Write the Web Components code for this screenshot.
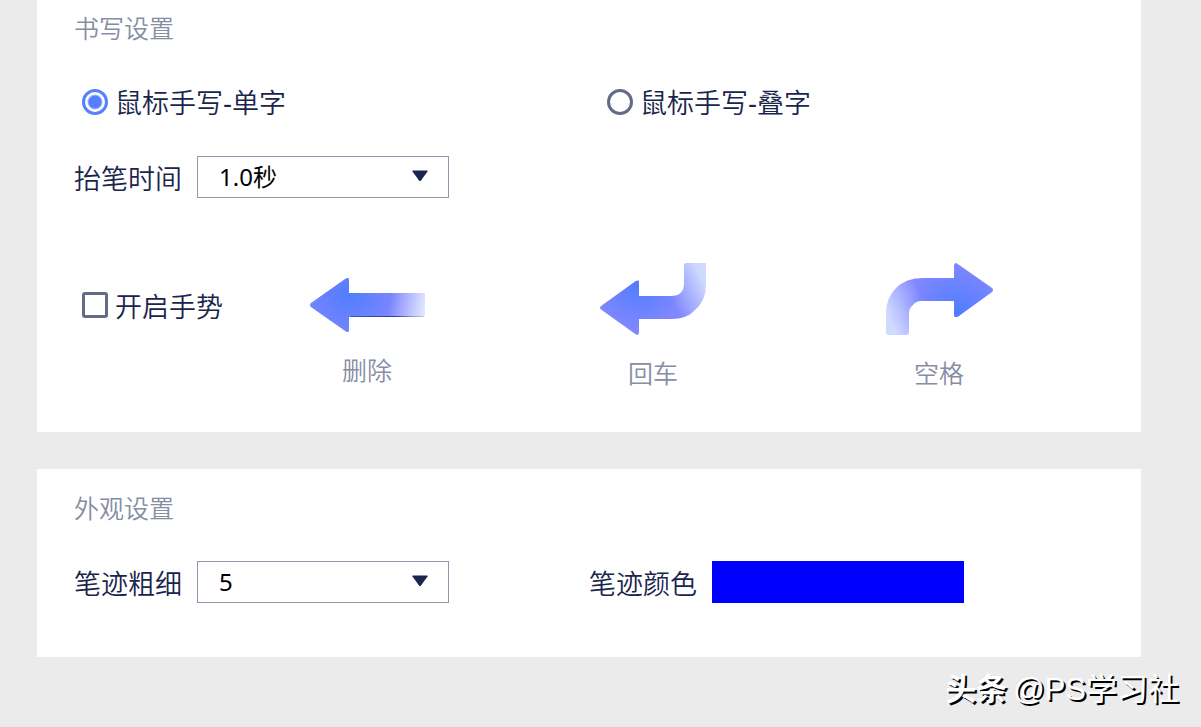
<!DOCTYPE html>
<html lang="zh-CN">
<head>
<meta charset="UTF-8">
<meta name="viewport" content="width=device-width, initial-scale=1">
<title>手写输入设置</title>
<style>
  body {
    margin: 0;
    min-height: 100vh;
    background: #ebebeb;
    font-family: "Noto Sans", "Noto Sans CJK SC", sans-serif;
    font-weight: 350;
    color: #19254d;
  }
</style>
</head>
<body>
<settings-page>
  <settings-card heading="书写设置">
    <radio-group name="mode" options="鼠标手写-单字,鼠标手写-叠字" value="0"></radio-group>
    <select-field label="抬笔时间" options="0.5秒,1.0秒,1.5秒,2.0秒" value="1.0秒"></select-field>
    <gesture-row label="开启手势">
      <gesture-item icon="delete">删除</gesture-item>
      <gesture-item icon="enter">回车</gesture-item>
      <gesture-item icon="space">空格</gesture-item>
    </gesture-row>
  </settings-card>
  <settings-card heading="外观设置" class="look">
    <field-row>
      <select-field label="笔迹粗细" options="1,2,3,4,5,6,7,8" value="5"></select-field>
      <color-field label="笔迹颜色" value="#0000ff"></color-field>
    </field-row>
  </settings-card>
  <page-mark slot="mark" brand="头条">@PS学习社</page-mark>
</settings-page>

<script>
class SettingsPage extends HTMLElement {
  constructor() {
    super();
    this.attachShadow({ mode: 'open' });
    this.shadowRoot.innerHTML = `
      <style>
        :host {
          display: block;
          position: relative;
          box-sizing: border-box;
          min-height: 100vh;
          overflow: hidden;
        }
        main {
          display: flex;
          flex-direction: column;
          gap: 37px;
          margin-top: -11px;
          padding: 0 60px 70px 37px;
        }
      </style>
      <main><slot></slot></main>
      <slot name="mark"></slot>
    `;
  }
}

class SettingsCard extends HTMLElement {
  constructor() {
    super();
    this.attachShadow({ mode: 'open' });
    this.shadowRoot.innerHTML = `
      <style>
        :host {
          display: flex;
          flex-direction: column;
          gap: 33px;
          padding: 22px 37px 40px;
          background: #fff;
        }
        :host(.look) { padding-bottom: 54px; }
        h2 {
          margin: 0 0 3px;
          font-size: 25px;
          font-weight: inherit;
          line-height: 34px;
          color: #868da5;
        }
      </style>
      <h2></h2>
      <slot></slot>
    `;
    this.shadowRoot.querySelector('h2').textContent = this.getAttribute('heading');
  }
}

class FieldRow extends HTMLElement {
  constructor() {
    super();
    this.attachShadow({ mode: 'open' });
    this.shadowRoot.innerHTML = `
      <style>
        :host {
          display: grid;
          grid-template-columns: 1fr 1fr;
        }
      </style>
      <slot></slot>
    `;
  }
}

class RadioGroup extends HTMLElement {
  constructor() {
    super();
    this.attachShadow({ mode: 'open' });
    const name = this.getAttribute('name');
    const options = this.getAttribute('options').split(',');
    this.shadowRoot.innerHTML = `
      <style>
        :host {
          display: grid;
          grid-template-columns: 1fr 1fr;
          column-gap: 20px;
        }
        label {
          display: flex;
          align-items: center;
          gap: 7px;
          padding-left: 8px;
          font-family: "Liberation Sans", "Noto Sans CJK SC", sans-serif;
          font-size: 27px;
          line-height: 38px;
        }
        span { padding-top: 4px; }
        input {
          appearance: none;
          flex: none;
          box-sizing: border-box;
          width: 26px;
          height: 26px;
          margin: 0;
          border: 3px solid #636b87;
          border-radius: 50%;
        }
        input:checked {
          border-color: #5580ff;
          background: radial-gradient(circle, #5580ff 6px, #fff 8px);
        }
      </style>
      ${options.map((text, i) => `
        <label><input type="radio" name="${name}" value="${i}"><span>${text}</span></label>
      `).join('')}
    `;
    this.shadowRoot.querySelectorAll('input')[this.getAttribute('value')].checked = true;
  }
}

class SelectField extends HTMLElement {
  constructor() {
    super();
    this.attachShadow({ mode: 'open' });
    const options = this.getAttribute('options').split(',');
    this.shadowRoot.innerHTML = `
      <style>
        :host {
          display: flex;
          align-items: center;
          gap: 15px;
        }
        label {
          padding-top: 4px;
          font-size: 27px;
          line-height: 38px;
        }
        .box {
          position: relative;
          width: 252px;
        }
        select {
          appearance: none;
          display: block;
          box-sizing: border-box;
          width: 100%;
          height: 42px;
          padding: 0 40px 2px 21px;
          border: 1px solid #9297ad;
          border-radius: 0;
          background: #fff;
          color: #000;
          font-family: inherit;
          font-size: 24px;
          font-weight: 400;
        }
        svg {
          position: absolute;
          top: 14px;
          right: 21px;
          pointer-events: none;
        }
      </style>
      <label for="select"></label>
      <div class="box">
        <select id="select">
          ${options.map(o => `<option>${o}</option>`).join('')}
        </select>
        <svg width="16" height="12" viewBox="0 0 16 12">
          <path d="M1 .5h14q1 0 .5 1L9 10.5q-1 1-2 0L.5 1.500Q0 .5 1 .5z" fill="#19254d"/>
        </svg>
      </div>
    `;
    this.shadowRoot.querySelector('label').textContent = this.getAttribute('label');
    this.shadowRoot.querySelector('select').value = this.getAttribute('value');
  }
}

class ColorField extends HTMLElement {
  constructor() {
    super();
    this.attachShadow({ mode: 'open' });
    this.shadowRoot.innerHTML = `
      <style>
        :host {
          display: flex;
          align-items: center;
          gap: 15px;
        }
        label {
          padding-top: 4px;
          font-size: 27px;
          line-height: 38px;
        }
        input {
          appearance: none;
          width: 252px;
          height: 42px;
          margin: 0;
          padding: 0;
          border: none;
          background: none;
        }
        input::-webkit-color-swatch-wrapper { padding: 0; }
        input::-webkit-color-swatch { border: none; border-radius: 0; }
      </style>
      <label for="color"></label>
      <input type="color" id="color">
    `;
    this.shadowRoot.querySelector('label').textContent = this.getAttribute('label');
    this.shadowRoot.querySelector('input').value = this.getAttribute('value');
  }
}

class GestureRow extends HTMLElement {
  constructor() {
    super();
    this.attachShadow({ mode: 'open' });
    this.shadowRoot.innerHTML = `
      <style>
        :host {
          display: grid;
          grid-template-columns: 150px repeat(3, 1fr);
          align-items: start;
          margin-top: 32px;
          padding-right: 22px;
        }
        label {
          display: flex;
          align-items: center;
          gap: 7px;
          margin-top: 21px;
          padding-left: 8px;
          font-size: 27px;
          line-height: 38px;
          white-space: nowrap;
        }
        span { padding-top: 4px; }
        input {
          appearance: none;
          flex: none;
          box-sizing: border-box;
          width: 26px;
          height: 26px;
          margin: 0;
          border: 3px solid #636b87;
          border-radius: 3px;
        }
        input:checked { background: #5580ff; }
      </style>
      <label><input type="checkbox"><span></span></label>
      <slot></slot>
    `;
    this.shadowRoot.querySelector('span').textContent = this.getAttribute('label');
  }
}

// body: violet fading out along the tail, glow: blue spot on the arrow head
const gestureIcons = {
  delete: `
    <svg width="118" height="69" viewBox="-2 0 118 69">
      <defs>
        <linearGradient id="body" gradientUnits="userSpaceOnUse" x1="80" y1="38" x2="115" y2="44">
          <stop offset="0" stop-color="#8087ff"/>
          <stop offset="1" stop-color="#e2e7ff"/>
        </linearGradient>
        <radialGradient id="glow" gradientUnits="userSpaceOnUse" cx="38" cy="30" r="52">
          <stop offset="0" stop-color="#507dff"/>
          <stop offset="1" stop-color="#507dff" stop-opacity="0"/>
        </radialGradient>
        <linearGradient id="edge" x1="0" x2="1">
          <stop offset="0" stop-color="#4752a0"/>
          <stop offset=".6" stop-color="#3a407c"/>
          <stop offset="1" stop-color="#c8cee8"/>
        </linearGradient>
        <path id="shape" d="M1 40 36 15.500Q39 14 39 17V30H115V52q0 2-2 2H39V67Q39 70 36 68.500L1 44Q-1 42 1 40z"/>
      </defs>
      <use href="#shape" fill="url(#body)"/>
      <use href="#shape" fill="url(#glow)"/>
      <path d="M41 53H114V54H41z" fill="url(#edge)"/>
    </svg>`,
  enter: `
    <svg width="107" height="72" viewBox="0 0 107 72">
      <defs>
        <linearGradient id="body" gradientUnits="userSpaceOnUse" x1="72" y1="38" x2="106" y2="22">
          <stop offset="0" stop-color="#8087ff"/>
          <stop offset="1" stop-color="#d0daff"/>
        </linearGradient>
        <radialGradient id="glow" gradientUnits="userSpaceOnUse" cx="38" cy="20" r="46">
          <stop offset="0" stop-color="#507dff"/>
          <stop offset="1" stop-color="#507dff" stop-opacity="0"/>
        </radialGradient>
        <path id="shape" d="M1 43 36 18Q39 16.500 39 19V33H71Q84 33 84 20V2q0-2 2-2H106V22Q106 38 94 48 86 56 72 56H39V69Q39 73 36 71.500L1 46.500Q-1 45 1 43z"/>
      </defs>
      <use href="#shape" fill="url(#body)"/>
      <use href="#shape" fill="url(#glow)"/>
    </svg>`,
  space: `
    <svg width="107" height="72" viewBox="0 0 107 72">
      <defs>
        <linearGradient id="body" gradientUnits="userSpaceOnUse" x1="36" y1="32" x2="0" y2="48">
          <stop offset="0" stop-color="#8087ff"/>
          <stop offset="1" stop-color="#d0daff"/>
        </linearGradient>
        <radialGradient id="glow" gradientUnits="userSpaceOnUse" cx="72" cy="50" r="50">
          <stop offset="0" stop-color="#507dff"/>
          <stop offset="1" stop-color="#507dff" stop-opacity="0"/>
        </radialGradient>
        <path id="shape" d="M68 15H36Q20 15 10 25 0 35 0 50V69q0 3 3 3H20q3 0 3-3V51Q23 45 27 42 30 38 35 38H68V52Q68 55 72 53.500L106 29Q108 27 106 25L71 .500Q68-1 68 3z"/>
      </defs>
      <use href="#shape" fill="url(#body)"/>
      <use href="#shape" fill="url(#glow)"/>
    </svg>`
};

class GestureItem extends HTMLElement {
  constructor() {
    super();
    this.attachShadow({ mode: 'open' });
    this.shadowRoot.innerHTML = `
      <style>
        :host {
          display: flex;
          flex-direction: column;
          align-items: center;
          gap: 21px;
          font-size: 25px;
          line-height: 34px;
          padding-bottom: 2px;
          color: #868da5;
        }
        svg { display: block; }
      </style>
      ${gestureIcons[this.getAttribute('icon')]}
      <span><slot></slot></span>
    `;
  }
}

class PageMark extends HTMLElement {
  constructor() {
    super();
    this.attachShadow({ mode: 'open' });
    this.shadowRoot.innerHTML = `
      <style>
        :host {
          position: absolute;
          right: 22px;
          bottom: 15px;
          display: flex;
          gap: 6px;
          font-family: "Liberation Sans", "Noto Sans CJK SC", sans-serif;
          font-size: 31px;
          font-weight: 400;
          line-height: 44px;
          color: #fff;
          text-shadow: 2px 2px 0 #000;
        }
        b { font-weight: 700; }
      </style>
      <b></b>
      <span><slot></slot></span>
    `;
    this.shadowRoot.querySelector('b').textContent = this.getAttribute('brand');
  }
}

customElements.define('settings-page', SettingsPage);
customElements.define('settings-card', SettingsCard);
customElements.define('field-row', FieldRow);
customElements.define('radio-group', RadioGroup);
customElements.define('select-field', SelectField);
customElements.define('color-field', ColorField);
customElements.define('gesture-row', GestureRow);
customElements.define('gesture-item', GestureItem);
customElements.define('page-mark', PageMark);
</script>
</body>
</html>
